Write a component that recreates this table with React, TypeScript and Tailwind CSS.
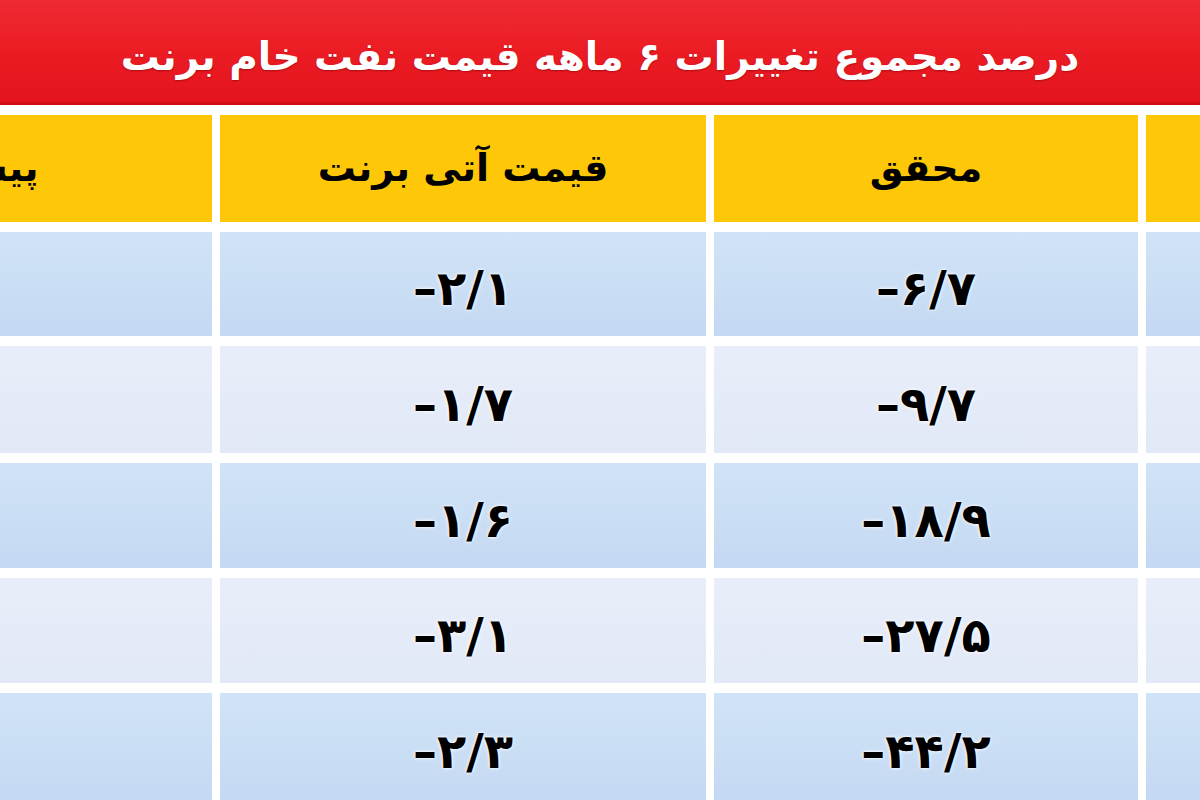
const farsi = "font-['DejaVu_Sans','Noto_Sans_Arabic',sans-serif]";

const rows = [
  { actual: "۶/۷", futures: "۲/۱", tone: "blue", h: "h-[104px]" },
  { actual: "۹/۷", futures: "۱/۷", tone: "light", h: "h-[107px]" },
  { actual: "۱۸/۹", futures: "۱/۶", tone: "blue", h: "h-[105px]" },
  { actual: "۲۷/۵", futures: "۳/۱", tone: "light", h: "h-[105px]" },
  { actual: "۴۴/۲", futures: "۲/۳", tone: "blue", h: "h-[107px]" },
];

const Num = ({ value }: { value: string }) => (
  <span
    dir="ltr"
    className="pt-2 text-[48px] font-bold text-black leading-none [text-shadow:0_0_4px_#fff,0_0_2px_#fff]"
  >
    –{value}
  </span>
);

export default function App() {
  return (
    <div className={`w-[1200px] h-[800px] overflow-hidden bg-white ${farsi}`}>
      <div className="h-[105px] bg-gradient-to-b from-[#ee2a32] via-[#ec1c24] to-[#e3141d] border-b-[3px] border-[#d20c15] flex items-center justify-center pt-3">
        <h1
          dir="rtl"
          className="text-white text-[39px] font-bold tracking-tight [text-shadow:0_1px_2px_rgba(120,0,0,0.5)]"
        >
          درصد مجموع تغییرات ۶ ماهه قیمت نفت خام برنت
        </h1>
      </div>

      <div className="mt-[10px] ml-[-302px] w-[1748px] flex flex-col gap-[10px]">
        <div className="grid grid-cols-[514px_486px_424px_300px] gap-x-[8px] h-[107px]">
          <div dir="rtl" className="bg-[#fec809] flex items-center justify-center text-[38px] font-bold text-black">
            پیش‌بینی
          </div>
          <div dir="rtl" className="bg-[#fec809] flex items-center justify-center text-[38px] font-bold text-black">
            قیمت آتی برنت
          </div>
          <div dir="rtl" className="bg-[#fec809] flex items-center justify-center text-[38px] font-bold text-black">
            محقق
          </div>
          <div className="bg-[#fec809]" />
        </div>

        {rows.map((r, i) => {
          const bg =
            r.tone === "blue"
              ? "bg-gradient-to-b from-[#d0e3f7] to-[#c4d9f2]"
              : "bg-gradient-to-b from-[#e8eef9] to-[#e1e8f7]";
          return (
            <div key={i} className={`grid grid-cols-[514px_486px_424px_300px] gap-x-[8px] ${r.h}`}>
              <div className={bg} />
              <div className={`${bg} flex items-center justify-center`}>
                <Num value={r.futures} />
              </div>
              <div className={`${bg} flex items-center justify-center`}>
                <Num value={r.actual} />
              </div>
              <div className={bg} />
            </div>
          );
        })}
      </div>
    </div>
  );
}
